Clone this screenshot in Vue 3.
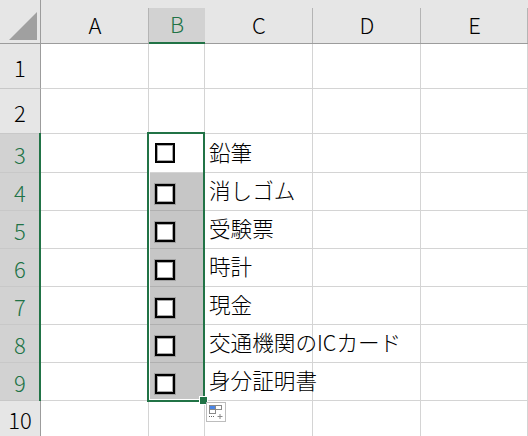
<script setup>
const columns = ['A', 'B', 'C', 'D', 'E'];
const rows = [
  { n: 1 },
  { n: 2 },
  { n: 3, label: '鉛筆', check: true },
  { n: 4, label: '消しゴム', check: true },
  { n: 5, label: '受験票', check: true },
  { n: 6, label: '時計', check: true },
  { n: 7, label: '現金', check: true },
  { n: 8, label: '交通機関のICカード', check: true },
  { n: 9, label: '身分証明書', check: true },
  { n: 10 },
];
</script>

<template>
  <div class="sheet">
    <div class="corner"><span class="tri"></span></div>
    <div v-for="c in columns" :key="c" class="col-head" :class="{ on: c === 'B' }">{{ c }}</div>

    <template v-for="r in rows" :key="r.n">
      <div class="row-head" :class="{ on: r.check }">{{ r.n }}</div>
      <div class="cell"></div>
      <div class="cell" :class="{ grey: r.check && r.n > 3 }">
        <span v-if="r.check" class="box"></span>
      </div>
      <div class="cell label">{{ r.label }}</div>
      <div class="cell"></div>
      <div class="cell"></div>
    </template>

    <div class="selection"><span class="handle"></span></div>
    <div class="row-bar"></div>
    <div class="quick">
      <svg width="20" height="20" viewBox="0 0 20 20">
        <rect x="3.5" y="3.5" width="6" height="4" fill="#4a86e8" stroke="#8a8a8a" />
        <rect x="9.5" y="3.5" width="6" height="4" fill="#fff" stroke="#8a8a8a" />
        <rect x="3.5" y="7.5" width="6" height="4" fill="#fff" stroke="#8a8a8a" />
        <path d="M3 14.5h6" stroke="#666" stroke-dasharray="1 1" />
        <path d="M14 12v5M11.5 14.5h5" stroke="#8a8a8a" />
      </svg>
    </div>
  </div>
</template>

<style scoped>
.sheet {
  position: relative;
  display: grid;
  grid-template-columns: 41px 108px 56px 108px 108px 107px;
  grid-template-rows: 44px 45px 45px 39px repeat(6, 38px) 36px;
  width: 528px;
  height: 436px;
  overflow: hidden;
  background: #fff;
  font-family: "Noto Sans CJK JP", "Liberation Sans", sans-serif;
  color: #000;
}

.corner {
  position: relative;
  background: #e6e6e6;
  border-right: 1px solid #9c9c9c;
  border-bottom: 1px solid #9c9c9c;
}

.tri {
  position: absolute;
  left: 9px;
  top: 12px;
  width: 28px;
  height: 28px;
  background: #a0a0a0;
  clip-path: polygon(100% 0, 100% 100%, 0 100%);
}

.col-head {
  display: flex;
  align-items: center;
  justify-content: center;
  padding-top: 6px;
  padding-bottom: 2px;
  background: #e6e6e6 linear-gradient(#b4b4b4, #b4b4b4) right 8px / 1px 100% no-repeat;
  border-bottom: 1px solid #9c9c9c;
  font-size: 22px;
  font-weight: 300;
}

.col-head.on {
  background:
    linear-gradient(#d2d2d2, #d2d2d2) 0 8px / 100% 100% no-repeat,
    #e6e6e6;
  border-bottom: 2px solid #217346;
  color: #217346;
}

.row-head {
  display: flex;
  align-items: center;
  justify-content: center;
  padding-top: 1px;
  background: #e6e6e6;
  border-right: 1px solid #9c9c9c;
  border-bottom: 1px solid #c8c8c8;
  font-size: 22px;
  font-weight: 300;
}

.row-head.on {
  background: #d2d2d2;
  color: #217346;
}

.cell {
  display: flex;
  align-items: center;
  min-width: 0;
  border-right: 1px solid #d4d4d4;
  border-bottom: 1px solid #d4d4d4;
}

.cell.grey {
  background: #c6c6c6;
  border-right-color: #b0b0b0;
  border-bottom-color: #b0b0b0;
}

.cell.grey .box {
  margin-top: 4px;
  outline: 1px solid #a0a0a0;
}

.label {
  padding-left: 4px;
  padding-bottom: 4px;
  font-size: 21.6px;
  font-weight: 300;
  white-space: nowrap;
  overflow: visible;
}

.box {
  box-sizing: border-box;
  width: 20px;
  height: 20px;
  margin-left: 6px;
  background: #fff;
  border: 2px solid #000;
  box-shadow: inset 0 0 0 1px #a8a8a8;
}

.selection {
  position: absolute;
  left: 147px;
  top: 132px;
  width: 58px;
  height: 270px;
  box-sizing: border-box;
  border: 2px solid #217346;
  box-shadow: inset 1px 0 #fff, inset 0 -1px #fff;
}

.handle {
  position: absolute;
  right: -5px;
  bottom: -5px;
  width: 7px;
  height: 7px;
  background: #217346;
  border: 1px solid #fff;
}

.row-bar {
  position: absolute;
  left: 39px;
  top: 133px;
  width: 2px;
  height: 268px;
  background: #217346;
}

.quick {
  position: absolute;
  left: 206px;
  top: 402px;
  width: 20px;
  height: 20px;
  box-sizing: border-box;
  background: #fff;
  border: 1px solid #bdbdbd;
}

.quick svg {
  display: block;
  margin: -1px;
}
</style>
